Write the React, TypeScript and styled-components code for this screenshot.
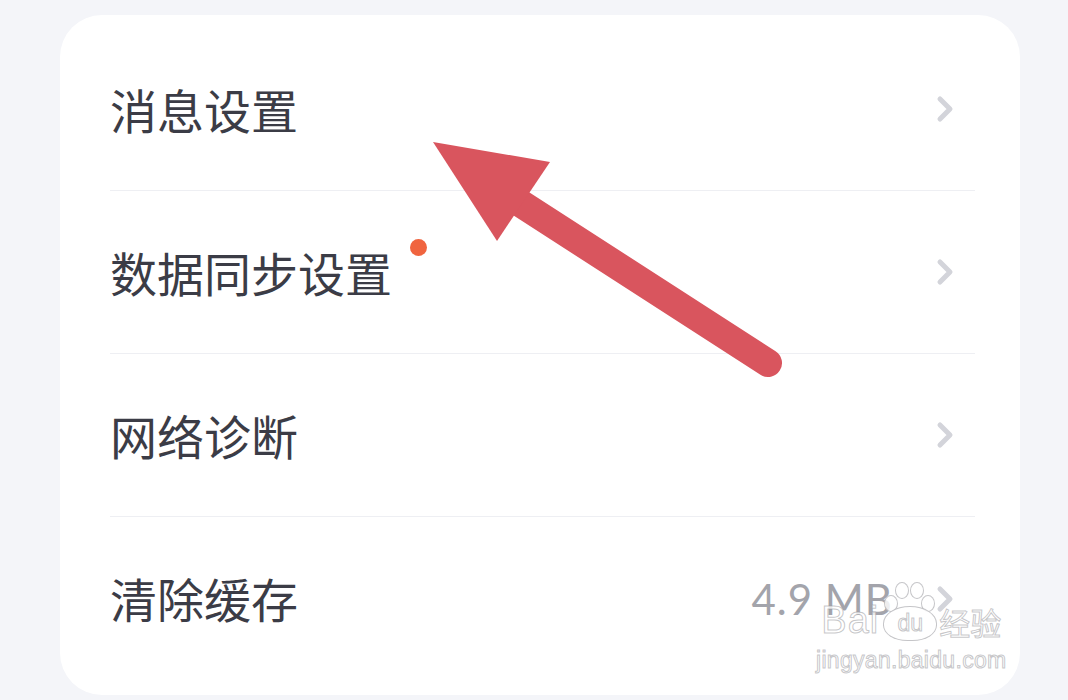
import styled, { createGlobalStyle } from "styled-components";

const GlobalStyle = createGlobalStyle`
  html, body {
    margin: 0;
    padding: 0;
    background: #f4f5f9;
  }
  body {
    font-family: "Noto Sans CJK SC", "Noto Sans", sans-serif;
    overflow: hidden;
  }
`;

type Item = {
  label: string;
  value?: string;
  dot?: boolean;
};

const items: Item[] = [
  { label: "消息设置" },
  { label: "数据同步设置", dot: true },
  { label: "网络诊断" },
  { label: "清除缓存", value: "4.9 MB" },
];

const App = () => {
  return (
    <Page>
      <GlobalStyle />
      <Card>
        {items.map((item, i) => (
          <Row key={item.label} $last={i === items.length - 1}>
            <Label>
              {item.label}
              {item.dot && <Dot />}
            </Label>
            <Right>
              {item.value && <Value>{item.value}</Value>}
              <Chevron viewBox="0 0 20 30">
                <path d="M5 5 L15 15 L5 25" />
              </Chevron>
            </Right>
          </Row>
        ))}
        <Watermark>
          <MarkTop>
            <span>Bai</span>
            <Paw>
              <PawToe $x={4} $y={14} />
              <PawToe $x={15} $y={1} />
              <PawToe $x={30} $y={1} />
              <PawToe $x={41} $y={14} />
              <PawPad>du</PawPad>
            </Paw>
            <span>经验</span>
          </MarkTop>
          <MarkUrl>jingyan.baidu.com</MarkUrl>
        </Watermark>
      </Card>
      <Arrow viewBox="0 0 1068 700">
        <line x1="768" y1="363" x2="520" y2="203" />
        <polygon points="433,142 550,162 497,241" />
      </Arrow>
    </Page>
  );
};

export default App;

const Page = styled.div`
  position: relative;
  width: 1068px;
  height: 700px;
  padding: 15px 0 0 60px;
  box-sizing: border-box;
`;

const Card = styled.div`
  position: relative;
  width: 960px;
  height: 680px;
  background: #ffffff;
  border-radius: 42px;
  padding: 13px 45px 0 50px;
  box-sizing: border-box;
`;

const Row = styled.div<{ $last?: boolean }>`
  display: flex;
  align-items: center;
  justify-content: space-between;
  height: 163px;
  padding-right: 20px;
  box-sizing: border-box;
  border-bottom: ${(p) => (p.$last ? "none" : "1.5px solid #eeeff3")};
`;

const Label = styled.div`
  position: relative;
  font-size: 47px;
  color: #3b3c46;
  line-height: 1;
  margin-top: -2px;
`;

const Dot = styled.span`
  position: absolute;
  right: -35px;
  top: -9px;
  width: 17px;
  height: 17px;
  border-radius: 50%;
  background: #f0643f;
`;

const Right = styled.div`
  display: flex;
  align-items: center;
  gap: 42px;
`;

const Value = styled.span`
  font-family: Lato, "Noto Sans", sans-serif;
  font-size: 42px;
  color: #a3a4ab;
  letter-spacing: 1px;
`;

const Chevron = styled.svg`
  width: 20px;
  height: 30px;
  fill: none;
  stroke: #d3d4da;
  stroke-width: 5;
  stroke-linecap: round;
  stroke-linejoin: round;
`;

const Watermark = styled.div`
  position: absolute;
  left: 756px;
  top: 566px;
  display: flex;
  flex-direction: column;
  align-items: center;
  color: rgba(255, 255, 255, 0.8);
  -webkit-text-stroke: 1px rgba(150, 150, 155, 0.55);
  font-family: "Liberation Sans", sans-serif;
`;

const MarkTop = styled.div`
  display: flex;
  align-items: flex-end;
  gap: 1px;
  font-size: 38px;
  line-height: 1;
  span:first-child {
    letter-spacing: 1px;
    margin-bottom: 2px;
  }
  span:last-child {
    font-family: "Noto Sans CJK SC", sans-serif;
    font-size: 31px;
    margin-bottom: 4px;
  }
`;

const Paw = styled.div`
  position: relative;
  width: 58px;
  height: 60px;
`;

const PawToe = styled.div<{ $x: number; $y: number }>`
  position: absolute;
  left: ${(p) => p.$x}px;
  top: ${(p) => p.$y}px;
  width: 12px;
  height: 15px;
  border-radius: 50%;
  border: 1px solid rgba(150, 150, 155, 0.55);
  background: rgba(255, 255, 255, 0.8);
`;

const PawPad = styled.div`
  position: absolute;
  left: 3px;
  bottom: 0;
  width: 52px;
  height: 33px;
  border-radius: 50% 50% 45% 45%;
  border: 1px solid rgba(150, 150, 155, 0.55);
  background: rgba(255, 255, 255, 0.8);
  font-size: 23px;
  display: flex;
  align-items: center;
  justify-content: center;
`;

const MarkUrl = styled.div`
  font-size: 23px;
  margin-top: 6px;
  letter-spacing: 0.3px;
`;

const Arrow = styled.svg`
  position: absolute;
  left: 0;
  top: 0;
  width: 1068px;
  height: 700px;
  pointer-events: none;
  line {
    stroke: #d9555e;
    stroke-width: 28;
    stroke-linecap: round;
  }
  polygon {
    fill: #d9555e;
  }
`;
